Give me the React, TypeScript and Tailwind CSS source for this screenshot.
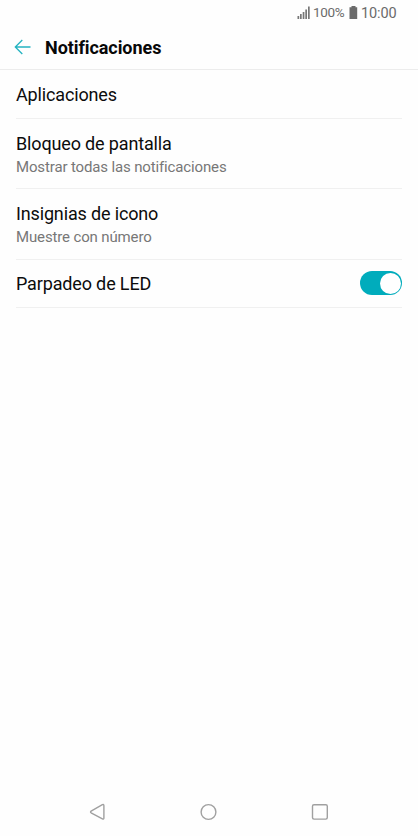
import React from 'react';

type RowProps = { title: string; subtitle?: string; height: string; children?: React.ReactNode };

function Row({ title, subtitle, height, children }: RowProps) {
  return (
    <li className={`mx-4 flex items-center justify-between border-b border-[#f0f0f0] ${height}`}>
      <div>
        <div className="text-[18px] leading-[24px] tracking-[-0.15px] text-[#0c0c0c]">{title}</div>
        {subtitle && <div className="text-[15px] leading-[23px] tracking-[-0.14px] text-[#777]">{subtitle}</div>}
      </div>
      {children}
    </li>
  );
}

function StatusBar() {
  return (
    <div className="flex h-[26px] items-center pl-[297px] text-[#6b6b6b]">
      <svg className="mb-px" width="13" height="13" viewBox="0 0 13 13" fill="#777">
        <path d="M0.5 10h1.7v3H0.5zM3 8h1.7v5H3zM5.7 6h1.7v7H5.7zM8.3 3.5H10V13H8.3zM11 .5h1.7V13H11z" />
      </svg>
      <span className="mb-[2px] ml-[3px] w-[32px] text-[13.5px] leading-[16px] tracking-[-0.3px]">100%</span>
      <svg className="mb-[2px] ml-[4px]" width="9" height="13" viewBox="0 0 9 13" fill="#6b6b6b">
        <path d="M2.5 0h4v1.3h1.7V13H.5V1.3h2z" />
      </svg>
      <span className="ml-[3px] pt-px text-[14.5px] leading-[16px] tracking-[-0.1px]">10:00</span>
    </div>
  );
}

export default function App() {
  return (
    <div className="flex h-[836px] w-[418px] flex-col bg-[#fefefe] font-[Roboto,sans-serif]">
      <StatusBar />
      <header className="flex h-[44px] items-center border-b border-[#ececec] pl-[14px]">
        <svg className="mb-[2px]" width="17" height="16" viewBox="0 0 17 16" fill="none" stroke="#24b3c1" strokeWidth="1.3">
          <path d="M8.3 1L1.3 8l7 7M1.3 8H16.5" />
        </svg>
        <h1 className="ml-[14px] text-[18px] font-bold leading-[24px] tracking-[-0.07px] text-[#080808]">Notificaciones</h1>
      </header>
      <ul className="flex-1">
        <Row title="Aplicaciones" height="h-[49px] pt-[2px]" />
        <Row title="Bloqueo de pantalla" subtitle="Mostrar todas las notificaciones" height="h-[70px] pt-[3px]" />
        <Row title="Insignias de icono" subtitle="Muestre con número" height="h-[71px] pt-[2px]" />
        <Row title="Parpadeo de LED" height="h-[48px]">
          <span className="mb-px flex h-[24px] w-[42px] items-center justify-end rounded-full bg-[#00acbc] pr-px">
            <span className="size-[21px] rounded-full bg-white" />
          </span>
        </Row>
      </ul>
      <nav className="flex h-[48px] items-center justify-center">
        <svg width="240" height="18" viewBox="0 0 240 18" fill="none" stroke="#a0a0a0" strokeWidth="1.4" strokeLinejoin="round">
          <path d="M2.1 8.1L13.4 1.7Q14.9 1 14.9 2.7V14.9Q14.9 16.6 13.4 15.8L2.1 9.8Q1 9 2.1 8.1Z" />
          <circle cx="119.5" cy="9" r="7.4" />
          <rect x="223.5" y="1.7" width="14.8" height="14.4" rx="1.5" />
        </svg>
      </nav>
    </div>
  );
}
